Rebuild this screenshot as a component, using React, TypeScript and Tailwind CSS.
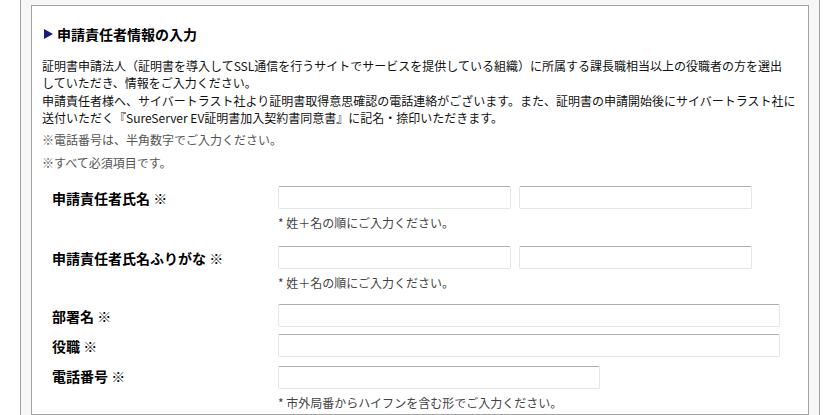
import { FC } from 'react';

const font = { fontFamily: '"Noto Sans CJK JP", "Noto Sans", sans-serif' };

const TextInput: FC<{ width: string }> = ({ width }) => (
  <input
    type="text"
    className={`${width} h-[23px] rounded-[2px] border border-[#e3e7ec] border-t-[#abadb3] bg-white px-1 text-[12px] outline-none`}
  />
);

const Helper: FC<{ text: string }> = ({ text }) => (
  <p className="mt-[5px] text-[12px] leading-[17px] text-[#444]">{text}</p>
);

const Label: FC<{ text: string }> = ({ text }) => (
  <div className="w-[236px] shrink-0 pl-[10px] pt-[1px] text-[14px] font-bold leading-[23px] text-black">
    {text} ※
  </div>
);

const App: FC = () => {
  return (
    <div className="h-[415px] overflow-hidden bg-white" style={font}>
      <div className="ml-[20px] h-full w-[800px] border-x border-[#a3a3a3] bg-[#f6f6f6] px-[10px] pt-[5px]">
        <div className="h-full border border-[#a3a3a3] bg-white px-[10px] pt-[18px]">
          {/* heading */}
          <div className="flex h-[20px] items-center">
            <svg width="9" height="10" viewBox="0 0 9 10" className="ml-[2px]">
              <polygon points="0,0 9,5 0,10" fill="#1a1a7e" />
            </svg>
            <h2 className="ml-[4px] text-[14px] font-bold leading-[20px] text-black">申請責任者情報の入力</h2>
          </div>

          {/* description */}
          <div className="mt-[13px] text-[12px] leading-[17.3px] text-[#111]">
            <p className="leading-[17.3px]">
              証明書申請法人（証明書を導入してSSL通信を行うサイトでサービスを提供している組織）に所属する課長職相当以上の役職者の方を選出
              <br />
              していただき、情報をご入力ください。
            </p>
            <p className="leading-[17.3px]">
              申請責任者様へ、サイバートラスト社より証明書取得意思確認の電話連絡がございます。また、証明書の申請開始後にサイバートラスト社に
              <br />
              送付いただく『SureServer EV証明書加入契約書同意書』に記名・捺印いただきます。
            </p>
          </div>
          <p className="mt-[5px] text-[12px] leading-[17px] text-[#555]">※電話番号は、半角数字でご入力ください。</p>
          <p className="mt-[6px] text-[12px] leading-[17px] text-[#555]">※すべて必須項目です。</p>

          {/* form */}
          <div className="mt-[15px] flex flex-col">
            <div className="flex">
              <Label text="申請責任者氏名" />
              <div>
                <div className="flex gap-[8px]">
                  <TextInput width="w-[233px]" />
                  <TextInput width="w-[233px]" />
                </div>
                <Helper text="* 姓＋名の順にご入力ください。" />
              </div>
            </div>

            <div className="mt-[15px] flex">
              <Label text="申請責任者氏名ふりがな" />
              <div>
                <div className="flex gap-[8px]">
                  <TextInput width="w-[233px]" />
                  <TextInput width="w-[233px]" />
                </div>
                <Helper text="* 姓＋名の順にご入力ください。" />
              </div>
            </div>

            <div className="mt-[13px] flex">
              <Label text="部署名" />
              <TextInput width="w-[502px]" />
            </div>

            <div className="mt-[6px] flex">
              <Label text="役職" />
              <TextInput width="w-[502px]" />
            </div>

            <div className="mt-[6px] flex">
              <Label text="電話番号" />
              <div>
                <TextInput width="w-[322px]" />
                <Helper text="* 市外局番からハイフンを含む形でご入力ください。" />
              </div>
            </div>
          </div>
        </div>
      </div>
    </div>
  );
};

export default App;
